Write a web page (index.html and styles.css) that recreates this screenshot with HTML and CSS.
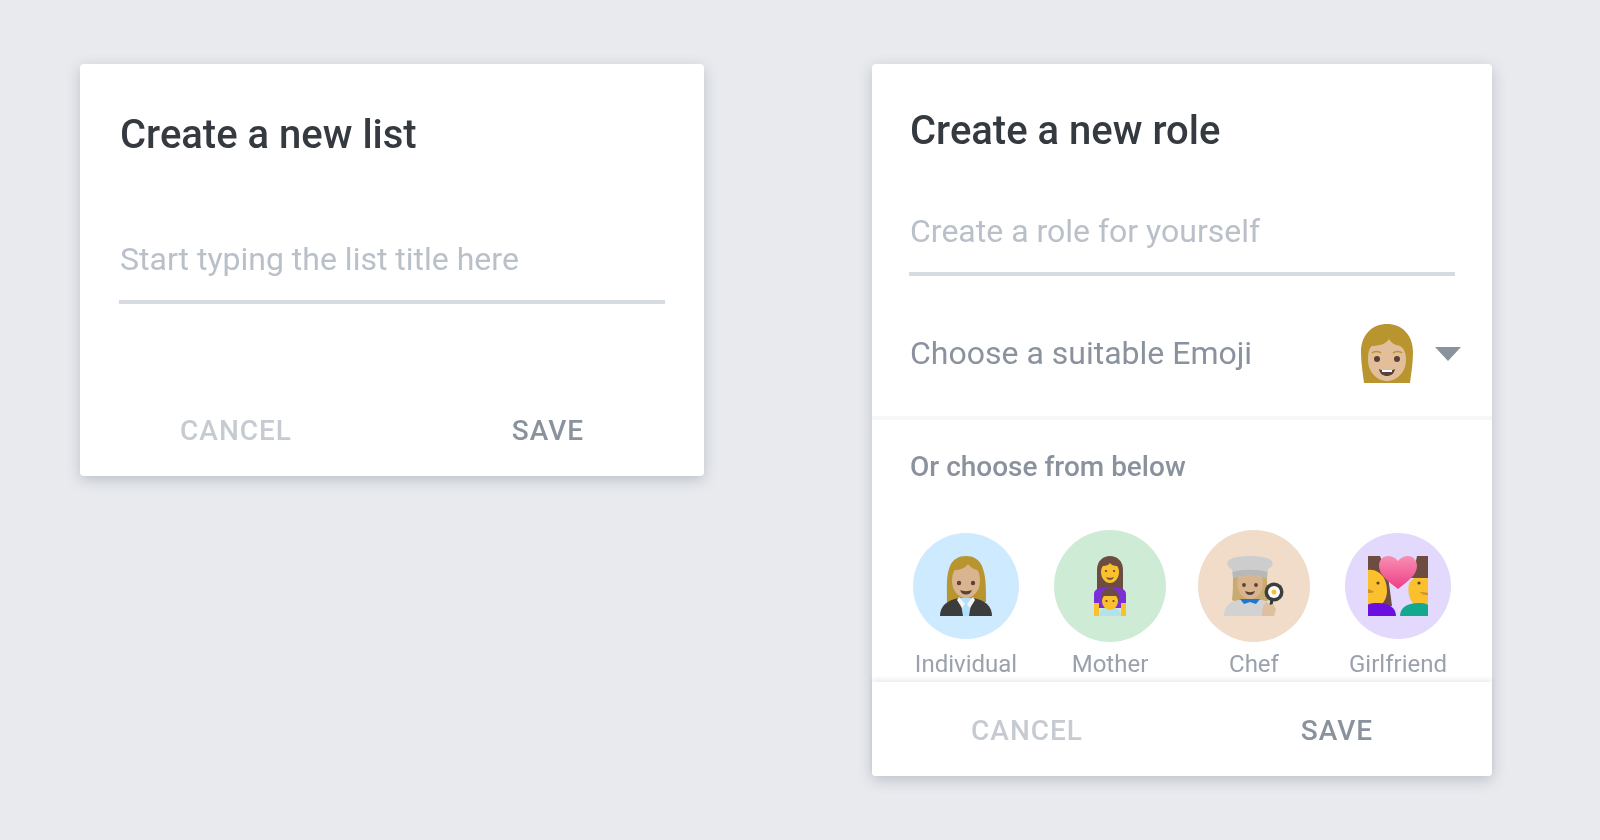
FILE: index.html
```html
<!DOCTYPE html>
<html>
<head>
    <title>Create dialogs</title>
    <link rel="stylesheet" href="styles.css">
</head>
<body>
    <div class="card card-list">
        <h2 class="card-title">Create a new list</h2>
        <input class="title-input" type="text" placeholder="Start typing the list title here">
        <div class="card-actions">
            <button class="btn btn-cancel">CANCEL</button>
            <button class="btn btn-save">SAVE</button>
        </div>
    </div>

    <div class="card card-role">
        <h2 class="card-title">Create a new role</h2>
        <input class="title-input" type="text" placeholder="Create a role for yourself">

        <div class="emoji-row">
            <span class="emoji-label">Choose a suitable Emoji</span>
            <svg class="emoji-head" width="52" height="60" viewBox="0 0 52 60">
                <path d="M3 59C2 50 0 40 0 28 0 10 12 0 26 0s26 10 26 28c0 12-2 22-3 31z" fill="#b8952f"/>
                <path d="M7 36c0-7 1-12 4-14 7 0 14-2 17-7 3 5 7 6 11 7 4 2 6 7 6 14 0 12-9 21-19 21S7 48 7 36z" fill="#e2be9a"/>
                <circle cx="16" cy="35" r="3" fill="#5d4037"/>
                <circle cx="36" cy="35" r="3" fill="#5d4037"/>
                <path d="M11 29c2-2 7-2 9 0M32 29c2-2 7-2 9 0" stroke="#b8952f" stroke-width="1.600" fill="none"/>
                <path d="M18 45c4 2 12 2 16 0-1 5-4 7-8 7s-7-2-8-7z" fill="#5d4037"/>
                <path d="M21 46h10v2H21z" fill="#fff"/>
            </svg>
            <span class="caret"></span>
        </div>

        <div class="presets">
            <div class="presets-title">Or choose from below</div>
            <div class="preset-grid">
                <div class="preset">
                    <div class="circle-wrap">
                        <div class="circle circle-small circle-blue">
                            <svg class="preset-icon" width="60" height="60" viewBox="0 0 60 60">
                                <path d="M11 46c0-16-1-26 3-36C17 3 23 0 30 0s13 3 16 10c4 10 4 20 4 36z" fill="#b8952f"/>
                                <path d="M16 25c0-5 1-9 3-11 5 0 10-2 13-6 2 3 5 5 9 6 2 2 3 6 3 11 0 10-7 17-14 17s-14-7-14-17z" fill="#d9b48f"/>
                                <circle cx="23" cy="27" r="2.200" fill="#5d4037"/>
                                <circle cx="37" cy="27" r="2.200" fill="#5d4037"/>
                                <path d="M24 34c3 1.500 9 1.500 12 0-1 3-3 4.500-6 4.500s-5-1.500-6-4.500z" fill="#5d4037"/>
                                <path d="M4 60c0-10 7-16 19-18h14c12 2 19 8 19 18z" fill="#3c3c3c"/>
                                <path d="M24 42h12l-3 18h-6z" fill="#b3e0f8"/>
                                <path d="M23 41l6 7-3 4-5-8zM37 41l-6 7 3 4 5-8z" fill="#f5f5f5"/>
                            </svg>
                        </div>
                    </div>
                    <div class="preset-label">Individual</div>
                </div>
                <div class="preset">
                    <div class="circle-wrap">
                        <div class="circle circle-green">
                            <svg class="preset-icon" width="60" height="60" viewBox="0 0 60 60">
                                <path d="M17 34V14C17 5 23 0 30 0s13 5 13 14v20z" fill="#6d4c41"/>
                                <path d="M21 16c0-3 1-5 2-6 3 0 6-1 7-3 1 2 4 3 7 3 1 1 2 3 2 6 0 6-4 11-9 11s-9-5-9-11z" fill="#fbc02d"/>
                                <path d="M14 52V38c0-5 6-7 16-7s16 2 16 7v14z" fill="#7b2fd6"/>
                                <path d="M14 60V47h5v13zM41 60V47h5v13z" fill="#fbc02d"/>
                                <path d="M19 60c0-6 5-9 11-9s11 3 11 9z" fill="#b2e3ec"/>
                                <path d="M21 42c0-6 4-10 9-10s9 4 9 10v4H21z" fill="#6d4c41"/>
                                <path d="M22 45c0-2 1-4 2-5 3 0 9 0 12 0 1 1 2 3 2 5 0 5-4 9-8 9s-8-4-8-9z" fill="#fbc02d"/>
                                <circle cx="26.500" cy="45" r="1.100" fill="#5d4037"/>
                                <circle cx="33.500" cy="45" r="1.100" fill="#5d4037"/>
                                <circle cx="26" cy="15" r="1.100" fill="#5d4037"/>
                                <circle cx="34" cy="15" r="1.100" fill="#5d4037"/>
                                <path d="M26 21c2 1 6 1 8 0-1 2-2 3-4 3s-3-1-4-3z" fill="#795548"/>
                            </svg>
                        </div>
                    </div>
                    <div class="preset-label">Mother</div>
                </div>
                <div class="preset">
                    <div class="circle-wrap">
                        <div class="circle circle-tan">
                            <svg class="preset-icon" width="60" height="60" viewBox="0 0 60 60">
                                <path d="M8 44c1-8 1-16 1-24h34c0 8 0 16 2 24-6 4-31 4-37 0z" fill="#c7ab6f"/>
                                <path d="M13 27c0-3 1-6 2-8h22c1 2 2 5 2 8 0 9-6 16-13 16s-13-7-13-16z" fill="#d8b48f"/>
                                <path d="M9 22l-1-9C2 11 2 5 7 3 13-1 39-1 45 3c5 2 5 8-1 10l-1 9c-10-3-24-3-34 0z" fill="#cdcdcd"/>
                                <path d="M9 22l-.5-6c10-3 25-3 35 0l-.5 6c-10-3-24-3-34 0z" fill="#b8b8b8"/>
                                <circle cx="20" cy="29" r="1.900" fill="#5d4037"/>
                                <circle cx="32" cy="29" r="1.900" fill="#5d4037"/>
                                <path d="M21 35c3 1.500 7 1.500 10 0-1 3-3 4-5 4s-4-1-5-4z" fill="#5d4037"/>
                                <path d="M0 60c0-9 5-14 14-16h24c6 1 9 4 10 8l-2 8z" fill="#d2d2d2"/>
                                <path d="M16 43h20l-4 5-6-2-6 2z" fill="#1e77d2"/>
                                <path d="M48 43l-2 13" stroke="#333" stroke-width="3"/>
                                <path d="M38 60c0-8 2-13 5-14l2 3 4-1 3 5-2 7z" fill="#dcc0a0"/>
                                <circle cx="50" cy="36" r="9.500" fill="#3d3d3d"/>
                                <circle cx="50" cy="36" r="6" fill="#fff"/>
                                <circle cx="50" cy="36" r="2.500" fill="#fbc02d"/>
                            </svg>
                        </div>
                    </div>
                    <div class="preset-label">Chef</div>
                </div>
                <div class="preset">
                    <div class="circle-wrap">
                        <div class="circle circle-small circle-purple">
                            <svg class="preset-icon" width="60" height="60" viewBox="0 0 60 60">
                                <defs>
                                    <linearGradient id="heartFill" x1="0" y1="0" x2="0" y2="1">
                                        <stop offset="0" stop-color="#f78fb3"/>
                                        <stop offset="1" stop-color="#ee3e85"/>
                                    </linearGradient>
                                </defs>
                                <path d="M0 0h12l8 20 4 30H0z" fill="#6d4c41"/>
                                <path d="M49 0h11v20H45z" fill="#6d4c41"/>
                                <path d="M0 14c6-1 12 2 16 8 2 4 3 8 3 13 0 8-5 16-12 16-3 0-5-1-7-3z" fill="#fbc02d"/>
                                <path d="M0 33c2 1 5 1 6 3-2 1-4 1-6 1z" fill="#b5762a" opacity=".6"/>
                                <circle cx="10" cy="27" r="1.600" fill="#5d4037"/>
                                <path d="M0 60V49c2-2 6-2 10-2 11 0 18 5 18 13z" fill="#6a0fe0"/>
                                <path d="M60 18c-7 0-16 3-19 10-2 8 1 18 6 21 4 2 9 2 13 0z" fill="#fbc02d"/>
                                <path d="M45 14h15v8H43z" fill="#6d4c41"/>
                                <circle cx="51" cy="27" r="1.600" fill="#5d4037"/>
                                <path d="M52 36c3 0 6 0 8 1v2c-3 0-6 0-8-3z" fill="#b5762a" opacity=".6"/>
                                <path d="M32 60c0-8 7-13 18-13 4 0 7 0 10 2v11z" fill="#14a88e"/>
                                <path d="M30 33C21 26 11 19 11 10 11 4 15 0 20 0c4 0 8 2 10 5 2-3 6-5 10-5 5 0 9 4 9 10 0 9-10 16-19 23z" fill="url(#heartFill)"/>
                            </svg>
                        </div>
                    </div>
                    <div class="preset-label">Girlfriend</div>
                </div>
            </div>
        </div>

        <div class="card-actions card-actions-raised">
            <button class="btn btn-cancel">CANCEL</button>
            <button class="btn btn-save">SAVE</button>
        </div>
    </div>
</body>
</html>
```

FILE: styles.css
```css
body {
    font-family: Roboto, "Liberation Sans", sans-serif;
    margin: 0;
    padding: 64px 0 0 80px;
    height: 840px;
    box-sizing: border-box;
    overflow: hidden;
    display: flex;
    align-items: flex-start;
    gap: 168px;
    background-color: #e8eaee;
}

.card {
    display: flex;
    flex-direction: column;
    background-color: #fff;
    border-radius: 4px;
    box-shadow: 0 4px 14px rgba(90, 100, 115, 0.3);
    filter: blur(0.4px);
}

.card-list {
    width: 624px;
    height: 412px;
}

.card-role {
    width: 620px;
    height: 712px;
}

.card-title {
    margin: 49px 0 0 40px;
    font-size: 40px;
    line-height: 44px;
    font-weight: 500;
    color: #353a41;
}

.title-input {
    display: block;
    width: 545px;
    height: 40px;
    box-sizing: content-box;
    margin: 82px 0 0 39px;
    padding: 0 0 21px 1px;
    border: none;
    border-bottom: 4px solid #d6dae1;
    outline: none;
    background: none;
    font-family: inherit;
    font-size: 32px;
    line-height: 40px;
    color: #353a41;
}

.title-input::placeholder {
    color: #b9c0c9;
    opacity: 1;
}

.card-actions {
    display: flex;
    height: 94px;
    margin-top: auto;
    flex: none;
}

.btn {
    flex: 1;
    border: none;
    background: none;
    padding: 2px 0 0;
    font-family: inherit;
    font-size: 28px;
    font-weight: 500;
    letter-spacing: 1px;
}

.btn-cancel {
    color: #c6cbd2;
}

.btn-save {
    color: #8a929e;
}

/* role card overrides */
.card-role .card-title {
    margin: 45px 0 0 38px;
}

.card-role .title-input {
    margin: 58px 0 0 37px;
    padding: 0 0 21px 1px;
}

.emoji-row {
    display: flex;
    align-items: center;
    padding: 48px 31px 32px 38px;
    border-bottom: 4px solid #f6f7f8;
}

.emoji-label {
    flex: 1;
    padding-bottom: 2px;
    font-size: 32px;
    color: #8a929e;
}

.caret {
    margin-left: 22px;
    border-left: 13.5px solid transparent;
    border-right: 13.5px solid transparent;
    border-top: 14px solid #8a929e;
}

.presets-title {
    margin: 29px 0 45px 38px;
    font-size: 28px;
    line-height: 36px;
    font-weight: 500;
    color: #8a929e;
}

.preset-grid {
    display: grid;
    grid-template-columns: repeat(4, 144px);
    padding-left: 22px;
}

.preset {
    display: flex;
    flex-direction: column;
    align-items: center;
}

.circle-wrap {
    display: flex;
    align-items: center;
    justify-content: center;
    height: 112px;
}

.circle {
    display: flex;
    align-items: center;
    justify-content: center;
    width: 112px;
    height: 112px;
    border-radius: 50%;
}

.circle-small {
    width: 106px;
    height: 106px;
}

.circle-blue {
    background-color: #cdeaff;
}

.circle-green {
    background-color: #cdebd5;
}

.circle-tan {
    background-color: #f0dcc9;
}

.circle-purple {
    background-color: #e2d9fd;
}

.preset-label {
    margin-top: 8px;
    font-size: 24px;
    line-height: 28px;
    color: #9aa1ac;
}

.card-actions-raised {
    background-color: #fff;
    border-radius: 0 0 4px 4px;
    box-shadow: 0 -3px 5px rgba(0, 0, 0, 0.07);
}
```
